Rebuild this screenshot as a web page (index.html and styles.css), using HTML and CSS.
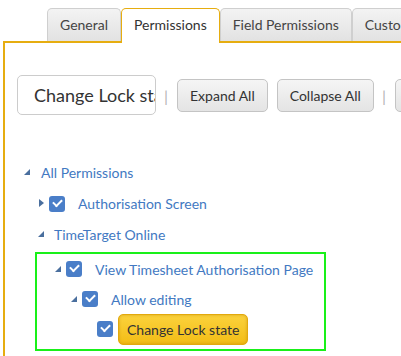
FILE: index.html
```html
<!DOCTYPE html>
<html lang="en">
<head>
    <meta charset="UTF-8">
    <title>Permissions</title>
    <link rel="stylesheet" href="styles.css">
</head>
<body>
    <div class="page">
        <!-- Tab strip -->
        <div class="tabs">
            <div class="tab">General</div>
            <div class="tab active">Permissions</div>
            <div class="tab">Field Permissions</div>
            <div class="tab">Custom Fields</div>
        </div>

        <div class="panel">
            <!-- Search and expand/collapse toolbar -->
            <div class="toolbar">
                <input class="search" type="text" value="Change Lock state">
                <span class="sep">|</span>
                <button class="btn">Expand All</button>
                <button class="btn">Collapse All</button>
                <span class="sep">|</span>
                <button class="btn">Save</button>
            </div>

            <!-- Permission tree -->
            <ul class="tree">
                <li class="row root">
                    <span class="toggle open"></span>
                    <span class="label">All Permissions</span>
                </li>
                <li class="row lvl1">
                    <span class="toggle closed"></span>
                    <span class="check"></span>
                    <span class="label">Authorisation Screen</span>
                </li>
                <li class="row lvl1">
                    <span class="toggle open"></span>
                    <span class="label">TimeTarget Online</span>
                </li>
            </ul>

            <div class="found">
                <div class="row lvl2">
                    <span class="toggle open"></span>
                    <span class="check"></span>
                    <span class="label">View Timesheet Authorisation Page</span>
                </div>
                <div class="row lvl3">
                    <span class="toggle open"></span>
                    <span class="check"></span>
                    <span class="label">Allow editing</span>
                </div>
                <div class="row lvl4">
                    <span class="check"></span>
                    <span class="label hit">Change Lock state</span>
                </div>
            </div>
        </div>
    </div>
</body>
</html>
```

FILE: styles.css
```css
body {
    margin: 0;
    background-color: #ffffff;
    font-family: Lato, "Open Sans", sans-serif;
    overflow: hidden;
}

.page {
    margin-left: 3px;
}

/* Tab strip */
.tabs {
    display: flex;
    align-items: flex-end;
    padding-left: 44px;
    padding-top: 8px;
    white-space: nowrap;
}

.tab {
    height: 32px;
    line-height: 32px;
    padding: 0 12px;
    font-size: 14px;
    color: #444;
    background: linear-gradient(#f3f3f3, #e2e2e2);
    border: 1px solid #cfcfcf;
    border-bottom: none;
    border-radius: 5px 5px 0 0;
    flex-shrink: 0;
}

.tab.active {
    height: 34px;
    background: #ffffff;
    color: #333;
    border: 1px solid #e6ad10;
    border-bottom: none;
    margin-bottom: -2px;
    position: relative;
}

/* Content area with gold frame */
.panel {
    border-top: 2px solid #e6ad10;
    border-left: 2px solid #e6ad10;
    height: 320px;
    padding-left: 12px;
}

.toolbar {
    display: flex;
    align-items: center;
    padding-top: 32px;
    white-space: nowrap;
}

.search {
    width: 139px;
    height: 40px;
    box-sizing: border-box;
    border: 1px solid #cccccc;
    border-radius: 5px;
    padding: 0 0 0 16px;
    font-family: Lato, sans-serif;
    font-size: 18px;
    color: #333;
    flex-shrink: 0;
}

.sep {
    color: #b5b5b5;
    font-size: 16px;
    margin: 0 9px 0 8px;
}

.btn {
    height: 33px;
    padding: 0 12px;
    margin-right: 9px;
    font-family: Lato, sans-serif;
    font-size: 14px;
    color: #333;
    background: linear-gradient(#f5f5f5, #e4e4e4);
    border: 1px solid #c4c4c4;
    border-radius: 5px;
    flex-shrink: 0;
}

.btn:nth-of-type(2) {
    margin-right: 0;
}

/* Tree */
.tree {
    list-style: none;
    margin: 42px 0 0 0;
    padding: 0;
}

.row {
    display: flex;
    align-items: center;
    height: 31px;
    font-size: 14px;
    color: #4279c2;
}

.row.root {
    padding-left: 6px;
}

.row.lvl1 {
    padding-left: 20px;
}

.toggle {
    width: 9px;
    height: 9px;
    margin-right: 8px;
    display: inline-block;
    position: relative;
    flex-shrink: 0;
}

.row.root .toggle {
    margin-right: 9px;
}

.toggle.open::before {
    content: "";
    position: absolute;
    left: 1px;
    top: 1px;
    border-left: 6px solid transparent;
    border-bottom: 6px solid #4a6f9e;
}

.toggle.closed::before {
    content: "";
    position: absolute;
    left: 2px;
    top: 0;
    border-top: 4px solid transparent;
    border-bottom: 4px solid transparent;
    border-left: 5px solid #4a6f9e;
}

.toggle + .check {
    margin-left: -5px;
}

.check {
    width: 16px;
    height: 16px;
    border-radius: 3px;
    background-color: #4a7ec8;
    margin-right: 13px;
    position: relative;
    flex-shrink: 0;
}

.check::after {
    content: "";
    position: absolute;
    left: 4px;
    top: 3px;
    width: 7px;
    height: 4px;
    border-left: 2px solid #fff;
    border-bottom: 2px solid #fff;
    transform: rotate(-45deg);
}

/* Search hit frame */
.found {
    width: 287px;
    margin: 2px 0 0 18px;
    border: 2px solid #19f019;
    padding: 0 0 5px 0;
}

.found .row {
    height: 30px;
}

.row.lvl2 {
    padding-left: 17px;
}

.row.lvl3 {
    padding-left: 33px;
}

.row.lvl4 {
    padding-left: 60px;
}

.row.lvl4 .check {
    margin-right: 5px;
}

.label.hit {
    color: #333;
    background: linear-gradient(#fbd23c, #f3bd16);
    border: 1px solid #e3a90c;
    border-radius: 5px;
    padding: 6px 8px;
    font-size: 14px;
    box-shadow: inset 0 0 3px rgba(180, 120, 0, 0.5);
}
```
